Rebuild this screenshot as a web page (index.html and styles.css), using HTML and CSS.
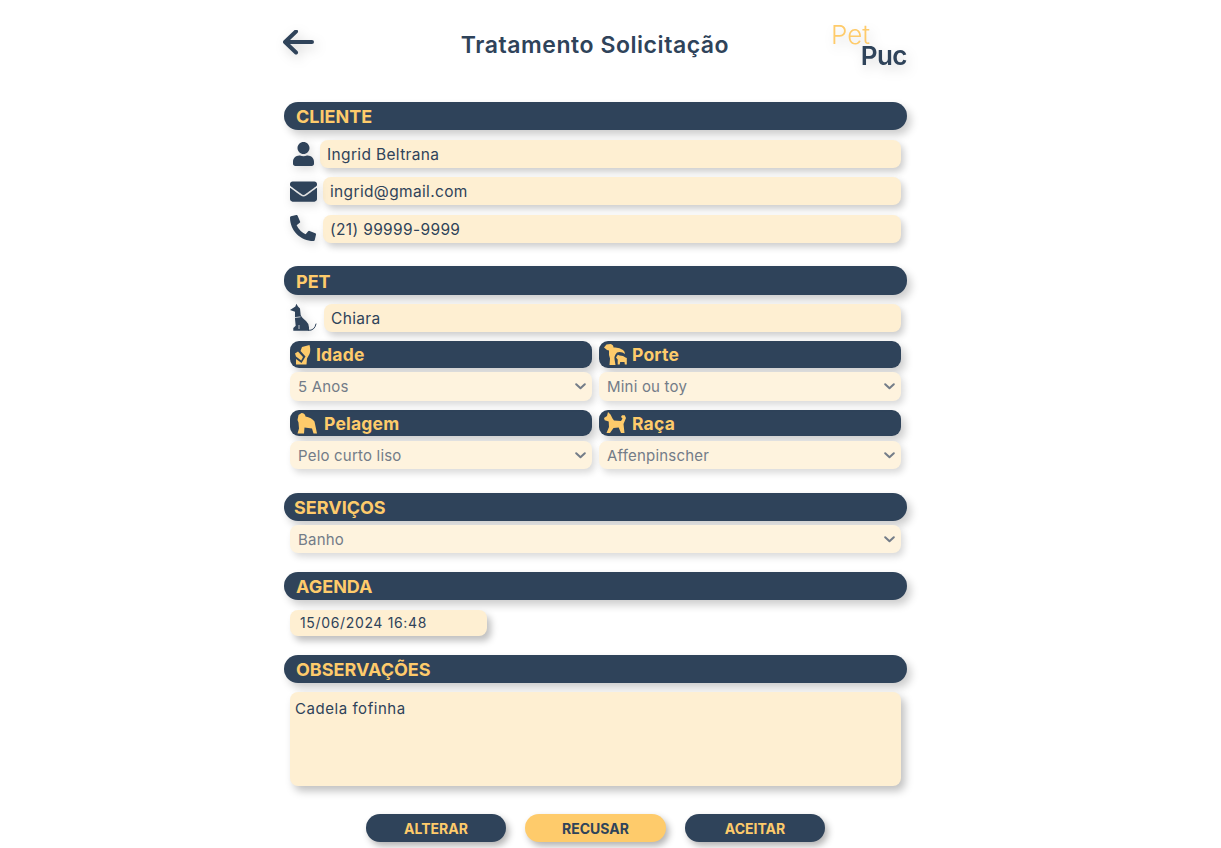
FILE: index.html
```html
<!DOCTYPE html>
<html lang="pt-BR">
<head>
  <meta charset="UTF-8">
  <meta name="viewport" content="width=device-width, initial-scale=1.0">
  <title>Tratamento Solicitação</title>
  <link rel="stylesheet" href="styles.css">
</head>
<body>
  <main class="page">
    <header class="top">
      <a class="back" href="#" aria-label="Voltar">
        <svg width="31" height="26" viewBox="0 0 31 26"><path d="M29 12H2M13 1.500 2 12 13 22.500" fill="none" stroke="#2f435a" stroke-width="4" stroke-linecap="round" stroke-linejoin="round"/></svg>
      </a>
      <h1 class="title">Tratamento Solicitação</h1>
      <div class="logo"><span class="logo-pet">Pet</span><span class="logo-puc">Puc</span></div>
    </header>

    <section class="section">
      <h2 class="bar">CLIENTE</h2>
      <div class="row row-first">
        <span class="row-icon icon-user"><svg width="21" height="24" viewBox="0 0 448 512"><path d="M224 256c70.7 0 128-57.3 128-128S294.7 0 224 0 96 57.3 96 128s57.3 128 128 128zm89.6 32h-16.7c-22.2 10.2-46.9 16-72.9 16s-50.6-5.8-72.9-16h-16.7C60.2 288 0 348.2 0 422.4V464c0 26.5 21.5 48 48 48h352c26.5 0 48-21.5 48-48v-41.6c0-74.2-60.2-134.4-134.4-134.4z"/></svg></span>
        <input class="field" type="text" value="Ingrid Beltrana">
      </div>
      <div class="row row-mail">
        <span class="row-icon"><svg width="27" height="27" viewBox="0 0 512 512"><path d="M502.3 190.8c3.9-3.1 9.7-.2 9.7 4.7V400c0 26.5-21.5 48-48 48H48c-26.5 0-48-21.5-48-48V195.6c0-5 5.7-7.8 9.7-4.7 22.4 17.4 52.1 39.5 154.1 113.6 21.1 15.4 56.7 47.8 92.2 47.6 35.7.3 72-32.8 92.3-47.6 102-74.1 131.6-96.3 154-113.7zM256 320c23.2.4 56.6-29.2 73.4-41.4 132.7-96.3 142.8-104.7 173.4-128.7 5.8-4.5 9.2-11.5 9.2-18.9v-19c0-26.5-21.5-48-48-48H48C21.5 64 0 85.5 0 112v19c0 7.4 3.4 14.3 9.2 18.9 30.6 23.9 40.7 32.4 173.4 128.7 16.8 12.2 50.2 41.8 73.4 41.4z"/></svg></span>
        <input class="field" type="text" value="ingrid@gmail.com">
      </div>
      <div class="row row-phone">
        <span class="row-icon"><svg width="26" height="26" viewBox="0 0 512 512"><path d="M497.39 361.8l-112-48a24 24 0 0 0-28 6.9l-49.6 60.6A370.66 370.66 0 0 1 130.6 204.11l60.6-49.6a23.94 23.94 0 0 0 6.9-28l-48-112A24.16 24.16 0 0 0 122.6.61l-104 24A24 24 0 0 0 0 48c0 256.5 207.9 464 464 464a24 24 0 0 0 23.4-18.6l24-104a24.29 24.29 0 0 0-14.01-27.6z"/></svg></span>
        <input class="field" type="text" value="(21) 99999-9999">
      </div>
    </section>

    <section class="section section-pet">
      <h2 class="bar bar-tall">PET</h2>
      <div class="row row-pet">
        <span class="row-icon">
          <svg width="27" height="28" viewBox="0 0 27 28"><path d="M6.3.7 5.4 3.6 0 7l5 1.7V16l.7 6.7L3.3 25v2.8H19V24.3Q18.8 20.5 16 18 11.5 14.5 10.7 12L10 5.5 8 3.5z"/><path d="M5 14.6 10.5 13.8M9 22V26" stroke="#fff" stroke-width=".7" fill="none"/><path d="M18.5 27.3Q24.5 28 26 21" stroke="#2f435a" stroke-width="1" fill="none" stroke-linecap="round"/></svg>
        </span>
        <input class="field" type="text" value="Chiara">
      </div>
      <div class="pet-grid">
        <div class="pet-cell">
          <h3 class="mini-bar">
            <svg class="mini-icon" width="16" height="20" viewBox="0 0 16 20"><path d="M7 2 14.5 0Q16 5.500 14.500 9L12 13.500 11.500 19.500H1V14L6.500 18 10.500 11.500 5.500 6z"/><path d="M0 8.500 3 6.500 8 12 6.200 15.500 1 11.500z"/></svg>
            Idade
          </h3>
          <div class="select-wrap select-a">
            <select class="select"><option>5 Anos</option></select>
            <svg class="chevron" width="11" height="7" viewBox="0 0 11 7"><path d="M1.200 1.200 5.500 5.300 9.800 1.200" /></svg>
          </div>
        </div>
        <div class="pet-cell">
          <h3 class="mini-bar">
            <svg class="mini-icon" width="23" height="21" viewBox="0 0 23 21"><path d="M0 3.500 2.500.5 6.500 0Q9.500 .8 9.500 3.500 15.500 3 19 6 21 7.500 21 10L18.500 8.500Q13 7 11.500 10.500 10 13 10.500 15L11.500 21H5.500L6 14.500Q4.500 11 5 6.500L3 6z"/><path d="M12 13.500 13.800 10.800 15.700 11.500 19 12 21.500 13.500 22.800 14V20.500H20.800L20.500 18H16.200L15.700 20.500H13.700V15.500z"/></svg>
            Porte
          </h3>
          <div class="select-wrap select-a">
            <select class="select"><option>Mini ou toy</option></select>
            <svg class="chevron" width="11" height="7" viewBox="0 0 11 7"><path d="M1.200 1.200 5.500 5.300 9.800 1.200" /></svg>
          </div>
        </div>
        <div class="pet-cell pet-cell-low">
          <h3 class="mini-bar mini-bar-short">
            <svg class="mini-icon mini-icon-wide" width="20" height="21" viewBox="0 0 20 21"><path d="M.5 7 1.500 2 4.500 0Q8 .3 8.500 3.500 14.500 4.500 17.500 8.500L20 20.500H16.500L15 15.500 7.500 14.500 7 20.500H.5L2 15.500 1.500 9.500z"/></svg>
            Pelagem
          </h3>
          <div class="select-wrap select-b">
            <select class="select"><option>Pelo curto liso</option></select>
            <svg class="chevron" width="11" height="7" viewBox="0 0 11 7"><path d="M1.200 1.200 5.500 5.300 9.800 1.200" /></svg>
          </div>
        </div>
        <div class="pet-cell pet-cell-low">
          <h3 class="mini-bar mini-bar-short">
            <svg class="mini-icon" width="23" height="22" viewBox="0 0 23 22"><path d="M0 6 3 4 4 0 6.500 2.500 8.500 6.500 10 8.500 17 9 18.500 6.500 17 5 18 3.300H20.700L22 6 19.500 12 20.500 21H17L14.700 15.500 9.500 16 6 21H2.500L5 15 4.700 9.500 .7 8.300z"/></svg>
            Raça
          </h3>
          <div class="select-wrap select-b">
            <select class="select"><option>Affenpinscher</option></select>
            <svg class="chevron" width="11" height="7" viewBox="0 0 11 7"><path d="M1.200 1.200 5.500 5.300 9.800 1.200" /></svg>
          </div>
        </div>
      </div>
    </section>

    <section class="section section-services">
      <h2 class="bar bar-services">SERVIÇOS</h2>
      <div class="select-wrap select-services">
        <select class="select"><option>Banho</option></select>
        <svg class="chevron" width="11" height="7" viewBox="0 0 11 7"><path d="M1.200 1.200 5.500 5.300 9.800 1.200" /></svg>
      </div>
    </section>

    <section class="section section-agenda">
      <h2 class="bar">AGENDA</h2>
      <div class="date-box">15/06/2024 16:48</div>
    </section>

    <section class="section section-agenda">
      <h2 class="bar">OBSERVAÇÕES</h2>
      <textarea class="notes">Cadela fofinha</textarea>
    </section>

    <div class="actions">
      <button class="btn" type="button">ALTERAR</button>
      <button class="btn btn-alt" type="button">RECUSAR</button>
      <button class="btn" type="button">ACEITAR</button>
    </div>
  </main>
</body>
</html>
```

FILE: styles.css
```css
* {
  box-sizing: border-box;
}
body {
  margin: 0;
  padding-right: 30px;
  display: flex;
  justify-content: center;
  background: #fff;
  color: #2f435a;
  font-family: Inter, "Noto Sans", sans-serif;
}
.page {
  width: 623px;
  padding-bottom: 6px;
}

/* topo */
.top {
  height: 102px;
  display: flex;
  align-items: flex-start;
}
.back {
  display: block;
  width: 76px;
  margin-top: 30px;
  margin-left: -1px;
}
.back svg {
  display: block;
  filter: drop-shadow(3px 4px 6px rgba(0, 0, 0, 0.18));
}
.title {
  flex: 1;
  margin: 30px 0 0;
  text-align: center;
  font-size: 23px;
  line-height: 30px;
  font-weight: 600;
  letter-spacing: 0.55px;
  white-space: nowrap;
}
.logo {
  width: 76px;
  margin-top: 22px;
  display: flex;
  flex-direction: column;
  filter: drop-shadow(3px 5px 6px rgba(0, 0, 0, 0.14));
}
.logo-pet {
  font-size: 26px;
  line-height: 26px;
  font-weight: 300;
  color: #fecb6b;
}
.logo-puc {
  align-self: flex-end;
  margin-top: -4px;
  font-size: 26px;
  line-height: 24px;
  font-weight: 600;
  letter-spacing: -0.5px;
}

/* faixas */
.bar {
  margin: 0;
  height: 28px;
  padding-left: 12px;
  border-radius: 14px;
  background: #2f435a;
  color: #fecb6b;
  font-size: 18px;
  line-height: 29px;
  font-weight: 700;
  box-shadow: 4px 5px 9px rgba(0, 0, 0, 0.2);
}
.bar-tall {
  height: 29px;
  line-height: 31px;
}
.bar-services {
  padding-left: 10px;
}
.section-pet {
  margin-top: 23px;
}
.section-services {
  margin-top: 24px;
}
.section-agenda {
  margin-top: 19px;
}

/* linhas do cliente */
.row {
  display: flex;
  align-items: center;
  padding: 0 6px;
  height: 28px;
  margin-top: 9px;
}
.row-first {
  margin-top: 10px;
}
.row-phone {
  margin-top: 10px;
}
.row-icon {
  flex: none;
  width: 33px;
  display: flex;
  justify-content: center;
}
.row-icon svg {
  display: block;
  fill: #2f435a;
  filter: drop-shadow(2px 3px 5px rgba(0, 0, 0, 0.15));
}
.row-first .row-icon {
  width: 30px;
  padding-right: 3px;
}
.row-mail .row-icon {
  padding-right: 6px;
}
.row-phone .row-icon {
  padding-right: 7px;
  margin-top: -3px;
}
.row-pet .row-icon {
  width: 34px;
  margin-top: -2px;
  justify-content: flex-start;
}
.field {
  flex: 1;
  min-width: 0;
  height: 28px;
  padding: 0 7px;
  border: 0;
  border-radius: 8px;
  background: #feefd2;
  color: #2f435a;
  font-family: inherit;
  font-size: 15.500px;
  letter-spacing: 0.35px;
  box-shadow: 3px 4px 7px rgba(0, 0, 0, 0.2);
}

/* grade do pet */
.pet-grid {
  display: grid;
  grid-template-columns: 302px 302px;
  column-gap: 7px;
  margin: 9px 6px 0;
}
.pet-cell-low {
  margin-top: 9px;
}
.mini-bar {
  display: flex;
  align-items: center;
  gap: 5px;
  margin: 0;
  height: 27px;
  padding-left: 5px;
  border-radius: 9px;
  background: #2f435a;
  color: #fecb6b;
  font-size: 17.500px;
  letter-spacing: 0.2px;
  font-weight: 700;
  box-shadow: 4px 5px 9px rgba(0, 0, 0, 0.2);
}
.mini-bar-short {
  height: 26px;
}
.mini-icon {
  flex: none;
  fill: #fecb6b;
}
.mini-icon-wide {
  margin: 0 2px 0 2px;
}
.select-wrap {
  position: relative;
}
.select-a {
  height: 29px;
  margin-top: 4px;
}
.select-a .select {
  padding-top: 0;
}
.select-b {
  height: 28px;
  margin-top: 5px;
}
.select-services {
  height: 28px;
  margin: 4px 6px 0;
}
.select {
  display: block;
  width: 100%;
  height: 100%;
  padding: 1px 24px 0 8px;
  appearance: none;
  border: 0;
  border-radius: 8px;
  background: #fef3de;
  color: #737c88;
  font-family: inherit;
  font-size: 15px;
  letter-spacing: 0.2px;
  box-shadow: 3px 4px 7px rgba(0, 0, 0, 0.15);
}
.chevron {
  position: absolute;
  right: 6px;
  top: 11px;
  fill: none;
  stroke: #737c88;
  stroke-width: 2;
  stroke-linecap: round;
  stroke-linejoin: round;
}

/* agenda e observações */
.date-box {
  width: 197px;
  height: 26px;
  margin: 10px 0 0 6px;
  padding-left: 10px;
  border-radius: 8px;
  background: #feefd2;
  font-size: 14px;
  line-height: 25px;
  letter-spacing: 0.65px;
  box-shadow: 4px 5px 7px rgba(0, 0, 0, 0.25);
}
.notes {
  display: block;
  width: 611px;
  height: 94px;
  margin: 9px 0 0 6px;
  padding: 6px 5px;
  resize: none;
  border: 0;
  border-radius: 8px;
  background: #feefd2;
  color: #2f435a;
  font-family: inherit;
  font-size: 15px;
  letter-spacing: 0.55px;
  line-height: 22px;
  box-shadow: 4px 5px 8px rgba(0, 0, 0, 0.25);
}

/* botões */
.actions {
  display: flex;
  justify-content: center;
  gap: 19px;
  margin-top: 28px;
}
.btn {
  width: 140px;
  height: 28px;
  padding: 1px 0 0;
  border: 0;
  border-radius: 14px;
  background: #2f435a;
  color: #fecb6b;
  font-family: inherit;
  font-size: 14px;
  font-weight: 700;
  box-shadow: 3px 4px 7px rgba(0, 0, 0, 0.3);
}
.btn-alt {
  width: 141px;
  background: #fecb6b;
  color: #2f435a;
}
```
